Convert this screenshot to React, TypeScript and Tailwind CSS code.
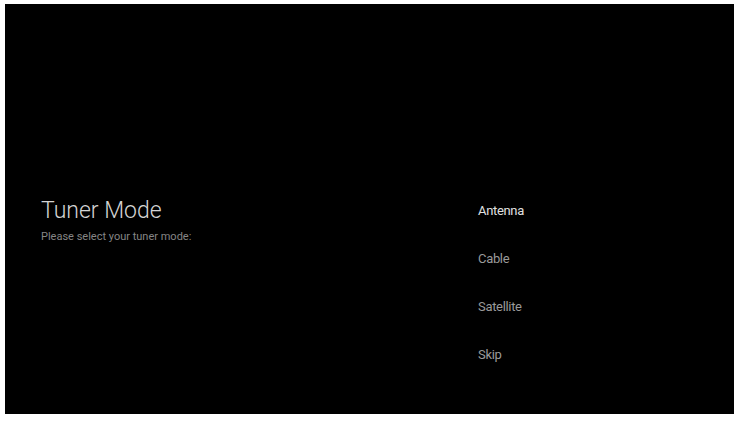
const options = ['Antenna', 'Cable', 'Satellite', 'Skip'];

export default function App() {
  return (
    <div className="w-[739px] h-[422px] bg-white pl-[5px] pr-[5px] pt-[4px] pb-[8px]" style={{ fontFamily: 'Roboto, "Liberation Sans", sans-serif' }}>
      <div className="h-full bg-black flex">
        {/* Left: title */}
        <div className="w-[473px] pl-[36px] pt-[192px]">
          <h1 className="text-[23px] leading-[30px] text-[#d4d4d4] font-light">Tuner Mode</h1>
          <p className="text-[11px] leading-[14px] text-[#858585] mt-[4px]">Please select your tuner mode:</p>
        </div>

        {/* Right: options */}
        <div className="flex flex-col pt-[195px]">
          {options.map((item, i) => (
            <div
              key={item}
              className={`h-[48px] text-[13px] leading-[24px] tracking-tight ${i === 0 ? 'text-[#e0e0e0]' : 'text-[#9a9a9a]'}`}
            >
              {item}
            </div>
          ))}
        </div>
      </div>
    </div>
  );
}
